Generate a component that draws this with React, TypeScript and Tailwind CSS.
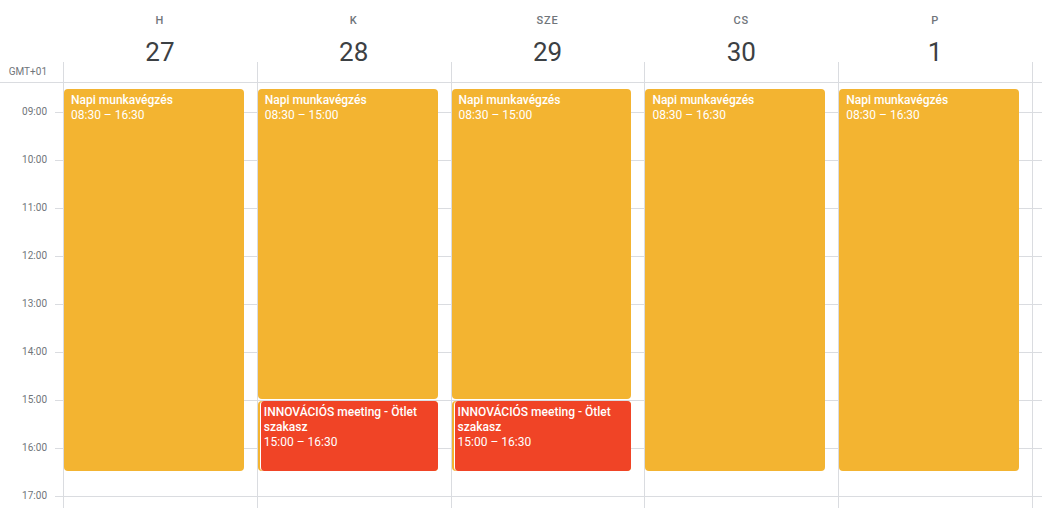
import React from "react";

type Ev = { title: string; time: string; start: number; end: number; color: string; inset?: boolean };

const days = [
  { name: "H", num: "27", events: [{ title: "Napi munkavégzés", time: "08:30 – 16:30", start: 8.5, end: 16.5, color: "bg-[#f3b431]" }] },
  {
    name: "K",
    num: "28",
    events: [
      { title: "Napi munkavégzés", time: "08:30 – 15:00", start: 8.5, end: 15, color: "bg-[#f3b431]" },
      { title: "", time: "", start: 15, end: 16.5, color: "bg-[#f3b431]" },
      { title: "INNOVÁCIÓS meeting - Ötlet szakasz", time: "15:00 – 16:30", start: 15, end: 16.5, color: "bg-[#f04426]", inset: true },
    ],
  },
  {
    name: "SZE",
    num: "29",
    events: [
      { title: "Napi munkavégzés", time: "08:30 – 15:00", start: 8.5, end: 15, color: "bg-[#f3b431]" },
      { title: "", time: "", start: 15, end: 16.5, color: "bg-[#f3b431]" },
      { title: "INNOVÁCIÓS meeting - Ötlet szakasz", time: "15:00 – 16:30", start: 15, end: 16.5, color: "bg-[#f04426]", inset: true },
    ],
  },
  { name: "CS", num: "30", events: [{ title: "Napi munkavégzés", time: "08:30 – 16:30", start: 8.5, end: 16.5, color: "bg-[#f3b431]" }] },
  { name: "P", num: "1", events: [{ title: "Napi munkavégzés", time: "08:30 – 16:30", start: 8.5, end: 16.5, color: "bg-[#f3b431]" }] },
];

const hours = ["09:00", "10:00", "11:00", "12:00", "13:00", "14:00", "15:00", "16:00", "17:00"];

// column top sits at 08:24 (29px above the 09:00 line), 48px per hour
const HOUR = 48;
const yOf = (h: number) => 29 + (h - 9) * HOUR;

function HourLines() {
  return (
    <>
      <div className="h-[29px] shrink-0" />
      {hours.map((h) => (
        <div key={h} className="h-[48px] shrink-0 border-t border-[#dadce0]" />
      ))}
    </>
  );
}

function Event({ ev }: { ev: Ev }) {
  const top = yOf(ev.start) + 1;
  const height = (ev.end - ev.start) * HOUR - 2;
  return (
    <div
      className={`absolute right-[13px] rounded-[4px] text-white text-[12px] leading-[15px] overflow-hidden ${ev.color} ${
        ev.inset ? "left-[2px] border-l border-white pl-[3px] pt-[4px]" : "left-0 px-[7px] pt-[4px]"
      }`}
      style={{ top, height }}
    >
      {ev.title && <div className="font-medium">{ev.title}</div>}
      {ev.time && <div>{ev.time}</div>}
    </div>
  );
}

export default function App() {
  return (
    <div className="w-[1042px] h-[508px] overflow-hidden bg-white font-['Roboto','Liberation_Sans',sans-serif]">
      {/* day header */}
      <div className="flex h-[62px]">
        <div className="w-[63px] shrink-0" />
        {days.map((d) => (
          <div key={d.name} className="flex-1 flex flex-col items-center pt-[15px]">
            <div className="text-[11px] leading-[12px] font-medium tracking-[0.8px] text-[#70757a]">{d.name}</div>
            <div className="mt-[8px] text-[26px] leading-[34px] text-[#3c4043]">{d.num}</div>
          </div>
        ))}
        <div className="w-[10px] shrink-0" />
      </div>

      {/* all-day row */}
      <div className="flex h-[21px] border-b border-[#dadce0]">
        <div className="w-[63px] shrink-0 pr-[16px] text-right text-[10px] leading-[19px] text-[#70757a]">GMT+01</div>
        {days.map((d) => (
          <div key={d.name} className="flex-1 border-l border-[#dadce0]" />
        ))}
        <div className="w-[10px] shrink-0 border-l border-[#dadce0]" />
      </div>

      {/* time grid */}
      <div className="flex h-[426px] overflow-hidden">
        <div className="w-[63px] shrink-0 flex flex-col">
          <div className="h-[29px] shrink-0" />
          {hours.map((h) => (
            <div key={h} className="h-[48px] shrink-0 relative">
              <div className="ml-auto w-[8px] border-t border-[#dadce0]" />
              <div className="absolute right-[16px] top-[-7px] text-[10px] leading-[14px] text-[#70757a]">{h}</div>
            </div>
          ))}
        </div>
        {days.map((d) => (
          <div key={d.name} className="flex-1 relative flex flex-col border-l border-[#dadce0]">
            <HourLines />
            {d.events.map((ev, i) => (
              <Event key={i} ev={ev} />
            ))}
          </div>
        ))}
        <div className="w-[10px] shrink-0 flex flex-col border-l border-[#dadce0]">
          <HourLines />
        </div>
      </div>
    </div>
  );
}
